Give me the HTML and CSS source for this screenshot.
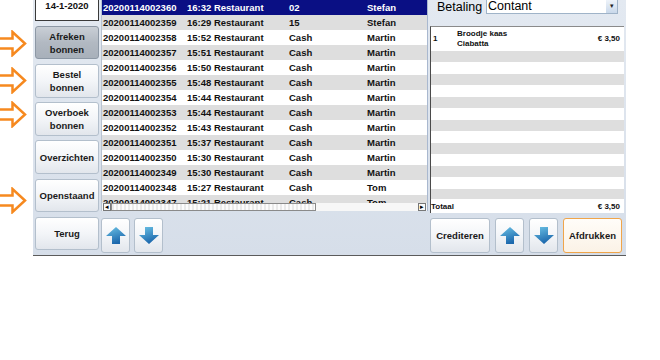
FILE: index.html
```html
<!DOCTYPE html>
<html lang="nl">
<head>
    <meta charset="UTF-8">
    <title>Bonnen</title>
    <link rel="stylesheet" href="styles.css">
</head>
<body>
    <svg class="hint hint-1" width="27" height="27" viewBox="0 0 27 27"><path d="M-3 8.5H12.5V2L25 13.5L12.5 25V18.5H-3Z"/></svg>
    <svg class="hint hint-2" width="27" height="27" viewBox="0 0 27 27"><path d="M-3 8.5H12.5V2L25 13.5L12.5 25V18.5H-3Z"/></svg>
    <svg class="hint hint-3" width="27" height="27" viewBox="0 0 27 27"><path d="M-3 8.5H12.5V2L25 13.5L12.5 25V18.5H-3Z"/></svg>
    <svg class="hint hint-4" width="27" height="27" viewBox="0 0 27 27"><path d="M-3 8.5H12.5V2L25 13.5L12.5 25V18.5H-3Z"/></svg>

    <div class="app">
        <div class="menu">
            <div class="date">14-1-2020</div>
            <button class="btn pressed">Afreken<br>bonnen</button>
            <button class="btn">Bestel<br>bonnen</button>
            <button class="btn">Overboek<br>bonnen</button>
            <button class="btn">Overzichten</button>
            <button class="btn">Openstaand</button>
            <button class="btn">Terug</button>
        </div>

        <div class="middle">
            <div class="list">
                <div class="rows">
                    <div class="row selected"><span>20200114002360</span><span>16:32 Restaurant</span><span>02</span><span>Stefan</span></div>
                    <div class="row"><span>20200114002359</span><span>16:29 Restaurant</span><span>15</span><span>Stefan</span></div>
                    <div class="row"><span>20200114002358</span><span>15:52 Restaurant</span><span>Cash</span><span>Martin</span></div>
                    <div class="row"><span>20200114002357</span><span>15:51 Restaurant</span><span>Cash</span><span>Martin</span></div>
                    <div class="row"><span>20200114002356</span><span>15:50 Restaurant</span><span>Cash</span><span>Martin</span></div>
                    <div class="row"><span>20200114002355</span><span>15:48 Restaurant</span><span>Cash</span><span>Martin</span></div>
                    <div class="row"><span>20200114002354</span><span>15:44 Restaurant</span><span>Cash</span><span>Martin</span></div>
                    <div class="row"><span>20200114002353</span><span>15:44 Restaurant</span><span>Cash</span><span>Martin</span></div>
                    <div class="row"><span>20200114002352</span><span>15:43 Restaurant</span><span>Cash</span><span>Martin</span></div>
                    <div class="row"><span>20200114002351</span><span>15:37 Restaurant</span><span>Cash</span><span>Martin</span></div>
                    <div class="row"><span>20200114002350</span><span>15:30 Restaurant</span><span>Cash</span><span>Martin</span></div>
                    <div class="row"><span>20200114002349</span><span>15:30 Restaurant</span><span>Cash</span><span>Martin</span></div>
                    <div class="row"><span>20200114002348</span><span>15:27 Restaurant</span><span>Cash</span><span>Tom</span></div>
                    <div class="row"><span>20200114002347</span><span>15:21 Restaurant</span><span>Cash</span><span>Tom</span></div>
                </div>
                <div class="hscroll">
                    <span class="sb-arrow">&#9666;</span>
                    <span class="sb-track"><span class="sb-thumb"></span></span>
                    <span class="sb-arrow">&#9656;</span>
                </div>
            </div>
            <div class="toolbar">
                <button class="btn icon-btn">
                    <svg width="20" height="17" viewBox="0 0 20 17"><path class="arrow" d="M10 0L20 9H14V17H6V9H0Z"/></svg>
                </button>
                <button class="btn icon-btn">
                    <svg width="20" height="17" viewBox="0 0 20 17"><path class="arrow" d="M10 17L20 8H14V0H6V8H0Z"/></svg>
                </button>
            </div>
        </div>

        <div class="detail">
            <div class="payment">
                <label for="betaling">Betaling</label>
                <div class="select" id="betaling"><span>Contant</span><span class="drop">&#9662;</span></div>
            </div>
            <div class="receipt">
                <div class="item">
                    <span class="qty">1</span>
                    <span class="name">Broodje kaas<br>Ciabatta</span>
                    <span class="price">€ 3,50</span>
                </div>
                <div class="stripes"></div>
                <div class="total"><span>Totaal</span><span>€ 3,50</span></div>
            </div>
            <div class="toolbar">
                <button class="btn wide">Crediteren</button>
                <button class="btn icon-btn">
                    <svg width="20" height="17" viewBox="0 0 20 17"><path class="arrow" d="M10 0L20 9H14V17H6V9H0Z"/></svg>
                </button>
                <button class="btn icon-btn">
                    <svg width="20" height="17" viewBox="0 0 20 17"><path class="arrow" d="M10 17L20 8H14V0H6V8H0Z"/></svg>
                </button>
                <button class="btn wide print">Afdrukken</button>
            </div>
        </div>
    </div>

    <svg width="0" height="0" class="defs">
        <defs>
            <linearGradient id="blue" x1="0" y1="0" x2="0.4" y2="1">
                <stop offset="0" stop-color="#6cc3e6"/>
                <stop offset="1" stop-color="#1c68ad"/>
            </linearGradient>
        </defs>
    </svg>
</body>
</html>
```

FILE: styles.css
```css
body {
    margin: 0;
    background-color: #fff;
    font-family: "Liberation Sans", Arial, sans-serif;
    color: #111;
}
.defs {
    position: absolute;
}
.hint {
    position: absolute;
    left: 0;
}
.hint path {
    fill: none;
    stroke: #f6891f;
    stroke-width: 2.5;
    stroke-linejoin: miter;
}
.hint-1 { top: 30px; }
.hint-2 { top: 67px; }
.hint-3 { top: 101px; }
.hint-4 { top: 187px; }

.app {
    margin-left: 33px;
    width: 593px;
    height: 256px;
    box-sizing: border-box;
    border-bottom: 1px solid #5b5b5b;
    background: linear-gradient(#e3e9f1, #d6dee9);
    display: flex;
    overflow: hidden;
}

/* knoppen */
.btn {
    box-sizing: border-box;
    border: 1px solid #b3bfcc;
    border-radius: 3px;
    background: linear-gradient(#ffffff, #f3f5f8 50%, #e2e6ec);
    font-family: "Liberation Sans", Arial, sans-serif;
    font-weight: bold;
    font-size: 9.5px;
    line-height: 13px;
    color: #1a1a1a;
    padding: 0;
    display: flex;
    align-items: center;
    justify-content: center;
}
.btn.pressed {
    background: linear-gradient(#c9cfd6, #b2b9c2 50%, #a8b0ba);
    border-color: #8d98a5;
}

.menu {
    width: 64px;
    margin-left: 2px;
    display: flex;
    flex-direction: column;
}
.date {
    box-sizing: border-box;
    height: 31px;
    margin-top: -10px;
    margin-bottom: 5px;
    background-color: #fff;
    border: 1px solid #3a3a3a;
    font-weight: bold;
    font-size: 9.5px;
    text-align: center;
    padding-top: 9px;
}
.menu .btn {
    height: 34px;
    margin-bottom: 4.6px;
    text-align: center;
}

/* lijst met bonnen */
.middle {
    width: 327px;
    margin-left: 2px;
    display: flex;
    flex-direction: column;
}
.list {
    height: 211px;
    box-sizing: border-box;
    border-left: 1px solid #b9c4d2;
    border-right: 1px solid #a9b8cf;
    background-color: #fff;
}
.rows {
    height: 203px;
    overflow: hidden;
}
.row {
    display: grid;
    grid-template-columns: 84px 102px 78px 1fr;
    height: 15px;
    line-height: 15px;
    padding-left: 1px;
    font-size: 9.5px;
    font-weight: bold;
    white-space: nowrap;
}
.row:nth-child(even) {
    background-color: #dedede;
}
.row.selected {
    background-color: #0a0f84;
    color: #fff;
}
.hscroll {
    height: 8px;
    display: flex;
    align-items: stretch;
    padding: 0 1px;
    background-color: #f4f4f4;
}
.sb-arrow {
    width: 8px;
    box-sizing: border-box;
    border: 1px solid #777;
    background-color: #fafafa;
    font-size: 7px;
    line-height: 6px;
    text-align: center;
    color: #000;
}
.sb-track {
    flex: 1;
    background-color: #f7f7f7;
}
.sb-thumb {
    display: block;
    width: 205px;
    height: 100%;
    box-sizing: border-box;
    border: 1px solid #8a8a8a;
    background: repeating-linear-gradient(90deg, #eaeaea 0 2px, #fcfcfc 2px 4px);
}
.toolbar {
    display: flex;
    gap: 4px;
    margin-top: 7px;
}
.icon-btn {
    width: 29px;
    height: 35px;
}
.arrow {
    fill: url(#blue);
}

/* rechter paneel */
.detail {
    width: 194px;
    margin-left: 2px;
    display: flex;
    flex-direction: column;
}
.payment {
    display: flex;
    align-items: center;
    height: 14px;
    font-size: 12.5px;
    color: #000;
}
.payment label {
    margin-left: 7px;
    width: 49px;
}
.select {
    flex: 1;
    margin-right: 6px;
    height: 14px;
    box-sizing: border-box;
    border: 1px solid #9fb3c8;
    border-top: none;
    background-color: #fff;
    display: flex;
    justify-content: space-between;
    line-height: 12px;
    padding-left: 1px;
}
.drop {
    width: 11px;
    font-size: 7px;
    text-align: center;
    background: linear-gradient(#eef3f9, #c9d8ea);
    color: #222;
}
.receipt {
    margin-top: 12px;
    height: 187px;
    box-sizing: border-box;
    border-top: 1px solid #8a8a8a;
    border-left: 1px solid #4a4a4a;
    background-color: #fff;
    font-size: 8px;
    font-weight: bold;
    display: flex;
    flex-direction: column;
}
.item {
    height: 24px;
    display: flex;
    align-items: center;
    line-height: 10px;
    padding: 0 4px 0 2px;
}
.qty {
    width: 24px;
}
.name {
    flex: 1;
}
.stripes {
    height: 148px;
    background: repeating-linear-gradient(#dedede 0 11.5px, #fff 11.5px 23px);
}
.total {
    flex: 1;
    display: flex;
    justify-content: space-between;
    align-items: center;
    padding: 0 4px 0 0;
}
.detail .toolbar {
    margin-top: 5px;
    gap: 5px;
}
.wide {
    width: 60px;
    height: 35px;
}
.print {
    width: 59px;
    border: 1px solid #f0a54a;
    background: linear-gradient(#fffdf9, #fbf2e6);
}
```
